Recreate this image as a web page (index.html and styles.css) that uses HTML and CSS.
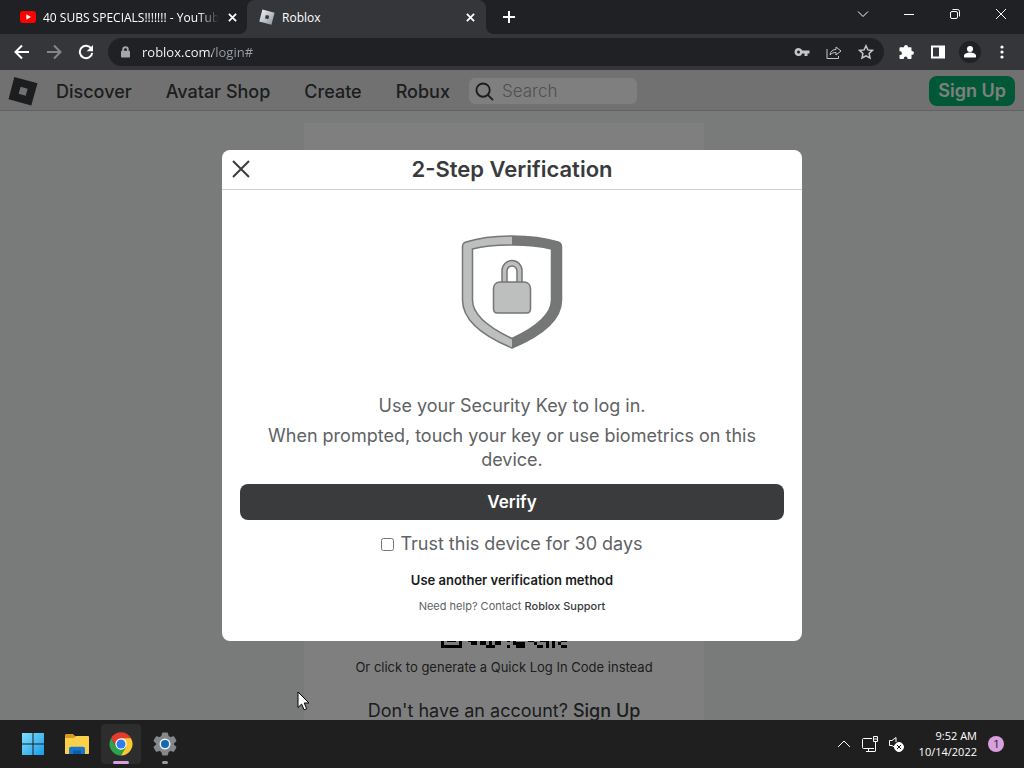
FILE: index.html
```html
<!DOCTYPE html>
<html lang="en">
<head>
    <meta charset="UTF-8">
    <meta name="viewport" content="width=device-width, initial-scale=1.0">
    <title>Roblox</title>
    <link rel="stylesheet" href="styles.css">
</head>
<body>

    <!-- Browser tabs -->
    <div class="tab-bar">
        <div class="tab">
            <svg class="tab-icon" viewBox="0 0 16 16"><rect y="2" width="16" height="12" rx="3" fill="#f00"/><path d="M6.3 5.2v5.6L11 8z" fill="#fff"/></svg>
            <span class="tab-title tab-title-fade">40 SUBS SPECIALS!!!!!!! - YouTub</span>
            <button class="tab-close" aria-label="Close tab"><svg viewBox="0 0 10 10"><path d="M1 1l8 8M9 1l-8 8"/></svg></button>
        </div>
        <div class="tab tab-active">
            <svg class="tab-icon" viewBox="0 0 16 16"><defs><linearGradient id="silver" x1="0" y1="0" x2="1" y2="1"><stop offset="0" stop-color="#f4f6f8"/><stop offset="1" stop-color="#8b939d"/></linearGradient></defs><path fill="url(#silver)" fill-rule="evenodd" d="M3.4.5l12.2 3.2-3.2 12L.3 12.5zM6.9 5.9l-.9 3.4 3.3.9.9-3.4z"/></svg>
            <span class="tab-title">Roblox</span>
            <button class="tab-close" aria-label="Close tab"><svg viewBox="0 0 10 10"><path d="M1 1l8 8M9 1l-8 8"/></svg></button>
        </div>
        <button class="new-tab" aria-label="New tab"><svg viewBox="0 0 12 12"><path d="M6 0v12M0 6h12"/></svg></button>
        <div class="window-controls">
            <button aria-label="Search tabs"><svg viewBox="0 0 12 12"><path d="M1 3.5l5 5 5-5"/></svg></button>
            <button aria-label="Minimize"><svg viewBox="0 0 12 12"><path d="M1 6.5h10"/></svg></button>
            <button aria-label="Restore"><svg viewBox="0 0 12 12"><rect x="1.5" y="3.5" width="7" height="7" rx="1.5"/><path d="M3.5 1.5h5a2 2 0 0 1 2 2v5"/></svg></button>
            <button aria-label="Close"><svg viewBox="0 0 12 12"><path d="M1 1l10 10M11 1L1 11"/></svg></button>
        </div>
    </div>

    <!-- Address bar -->
    <div class="toolbar">
        <button class="tool" aria-label="Back"><svg viewBox="0 0 16 16"><path class="line" d="M15 8H2M8 1.5L1.5 8 8 14.5"/></svg></button>
        <button class="tool tool-off" aria-label="Forward" disabled><svg viewBox="0 0 16 16"><path class="line" d="M1 8h13M8 1.5L14.5 8 8 14.5"/></svg></button>
        <button class="tool" aria-label="Reload"><svg viewBox="0 0 16 16"><path class="line" d="M13.3 4.7A6.2 6.2 0 1 0 14.2 8.8"/><path d="M15 1v6.3H8.7z"/></svg></button>
        <div class="address">
            <svg class="lock" viewBox="0 0 10 12"><rect y="4.5" width="10" height="7.5" rx="1"/><path class="line" d="M2.4 5V3.3a2.6 2.6 0 0 1 5.2 0V5"/></svg>
            <input class="url" type="text" aria-label="Address" value="roblox.com/login#">
            <button class="tool tool-soft" aria-label="Passwords"><svg viewBox="0 0 16 16"><path fill-rule="evenodd" d="M4.5 4a4 4 0 1 0 3.8 5.4H10.500V12h3V9.400H15.500V6.600H8.300A4 4 0 0 0 4.500 4zm0 2.500a1.500 1.500 0 1 1 0 3 1.500 1.500 0 0 1 0-3z"/></svg></button>
            <button class="tool tool-soft" aria-label="Share"><svg viewBox="0 0 16 16"><path class="thin" d="M1 5v9.500h11.500V12M4 11c.3-3.500 2.500-5.500 6-5.500V3l5 4-5 4V8.500c-2.500 0-4.500.6-6 2.500z"/></svg></button>
            <button class="tool tool-soft" aria-label="Bookmark"><svg viewBox="0 0 16 16"><path class="thin" stroke-width="1.5" d="M8 1.800l1.900 4.100 4.500.5-3.300 3.100.9 4.500L8 11.800 4 14l.9-4.500L1.600 6.400l4.500-.5z"/></svg></button>
        </div>
        <button class="tool" aria-label="Extensions"><svg viewBox="0 0 16 16"><path d="M6 3a2 2 0 0 1 4 0v.3h2.500c.6 0 1 .4 1 1V7H14a1.900 1.900 0 0 1 0 3.800h-.5v3.100c0 .6-.4 1-1 1H9.600v-.5a1.900 1.900 0 0 0-3.800 0v.5H2.500c-.6 0-1-.4-1-1v-2.800H2a1.900 1.900 0 0 0 0-3.900h-.5V4.300c0-.6.4-1 1-1H6z"/></svg></button>
        <button class="tool" aria-label="Side panel"><svg viewBox="0 0 16 16"><path fill-rule="evenodd" d="M1 1.500h14v13H1zM3 3.500v9h6v-9z"/></svg></button>
        <button class="tool profile" aria-label="Profile"><svg viewBox="0 0 16 16"><circle cx="8" cy="5" r="3"/><path d="M2 13.500V12c0-2.200 3-3.400 6-3.400s6 1.200 6 3.400v1.500z"/></svg></button>
        <button class="tool" aria-label="Menu"><svg viewBox="0 0 16 16"><circle cx="8" cy="3" r="1.600"/><circle cx="8" cy="8" r="1.600"/><circle cx="8" cy="13" r="1.600"/></svg></button>
    </div>

    <!-- Login page -->
    <main class="page">
        <nav class="nav">
            <a class="logo" href="#" aria-label="Roblox"><svg viewBox="0 0 30 30"><path fill-rule="evenodd" d="M6.300 1L29.500 7.200 23.300 29.500.5 23.300zM12.600 10.800l-1.900 7 7 1.900 1.900-7z"/></svg></a>
            <a href="#">Discover</a>
            <a href="#">Avatar Shop</a>
            <a href="#">Create</a>
            <a href="#">Robux</a>
            <label class="search">
                <svg viewBox="0 0 20 20"><circle cx="8.500" cy="8.500" r="7"/><path d="M13.500 13.500L19 19"/></svg>
                <input type="search" placeholder="Search" aria-label="Search">
            </label>
            <a class="sign-up" href="#">Sign Up</a>
        </nav>

        <div class="content">
            <section class="login-card">
                <svg class="qr" viewBox="0 0 42 42"><path d="M0 35h7v7H0zM9 39h3v1H9zM10 40h2v1h-2zM13 39h2v2h-2zM15 41h3v1h-3zM16 39h1v2h-1zM18 39h2v2h-2zM22 39h1v1h-1zM22 41h1v1h-1zM24 39h1v2h-1zM25 40h3v2h-3zM29 39h2v1h-2zM31 40h1v1h-1zM33 39h3v1h-3zM32 41h2v1h-2zM35 40h1v2h-1zM37 39h1v3h-1zM39 40h1v1h-1zM40 39h2v1h-2zM40 41h2v1h-2z"/><path fill="#fff" d="M1 36h5v5H1z"/><path d="M2 37h3v3H2z"/></svg>
                <p class="quick-code">Or click to generate a Quick Log In Code instead</p>
                <p class="no-account">Don't have an account? <a href="#">Sign Up</a></p>
            </section>
        </div>

        <!-- Verification dialog -->
        <div class="backdrop">
            <div class="modal" role="dialog" aria-labelledby="modalTitle">
                <header class="modal-header">
                    <button class="modal-close" aria-label="Close"><svg viewBox="0 0 18 18"><path d="M1 1l16 16M17 1L1 17"/></svg></button>
                    <h1 id="modalTitle">2-Step Verification</h1>
                </header>
                <div class="modal-body">
                    <svg class="shield" viewBox="0 0 102 116">
                        <path fill="#bdbebe" d="M51 2C34 2 18 4 5 8 2 9 1.500 10 1.500 13v53C1.500 86 22 102 51 114z"/>
                        <path fill="#757676" d="M51 2c17 0 33 2 46 6 3 1 3.500 2 3.500 5v53C100.500 86 80 102 51 114z"/>
                        <g stroke="#757676" stroke-width="1.5">
                            <path fill="none" d="M51 2C34 2 18 4 5 8 2 9 1.500 10 1.500 13v53C1.500 86 22 102 51 114c29-12 49.500-28 49.500-48V13c0-3-.5-4-3.500-5C84 4 68 2 51 2z"/>
                            <path fill="#fff" d="M51 11c-14 0-28 1-39.500 4v51c0 14 15 27 39.500 38.500C75.500 93 90.500 80 90.500 66V15C79 12 65 11 51 11z"/>
                            <path fill="#bdbebe" d="M41 50V36.500a10 10 0 0 1 20 0V50h-5V37a5 5 0 0 0-10 0v13z"/>
                            <path fill="#bdbebe" d="M39 48h24c4 0 6.500 3 6.500 7v20c0 3-1 4-4 4h-29c-3 0-4-1-4-4V55c0-4 2.500-7 6.500-7z"/>
                        </g>
                    </svg>
                    <p>Use your Security Key to log in.</p>
                    <p>When prompted, touch your key or use biometrics on this device.</p>
                    <button class="verify">Verify</button>
                    <label class="trust"><input type="checkbox"> Trust this device for 30 days</label>
                    <a class="other-method" href="#">Use another verification method</a>
                    <small class="help">Need help? Contact <a href="#">Roblox Support</a></small>
                </div>
            </div>
        </div>
    </main>

    <!-- Windows taskbar -->
    <footer class="taskbar">
        <button class="app" aria-label="Start"><svg viewBox="0 0 24 24"><defs><linearGradient id="sky" x1="0" y1="0" x2="1" y2="1"><stop offset="0" stop-color="#7fe0fb"/><stop offset="1" stop-color="#1a9bea"/></linearGradient></defs><path fill="url(#sky)" d="M1 1h10.500v10.500H1zM12.500 1H23v10.500H12.500zM1 12.500h10.500V23H1zM12.500 12.500H23V23H12.500z"/></svg></button>
        <button class="app" aria-label="File Explorer"><svg viewBox="0 0 24 24"><path fill="#d99a1c" d="M0 3.500C0 2.500.5 2 1.500 2H8l2.500 2.500V8H0z"/><path fill="#fbd04b" d="M0 6h9l2-2h12c.7 0 1 .5 1 1v16c0 .7-.4 1-1 1H1c-.6 0-1-.4-1-1z"/><path fill="#1976c8" d="M4 22v-5c0-1.400.9-2.300 2.300-2.300h11.400c1.400 0 2.300.9 2.300 2.300v5h-4v-3H8v3z"/><path fill="#0f5ba8" d="M8 18.500h8V22H8z"/></svg></button>
        <button class="app app-open app-current" aria-label="Google Chrome"><svg viewBox="0 0 24 24"><path fill="#e33b2e" d="M12 12L2.040 6.250a11.500 11.500 0 0 1 19.920 0z"/><path fill="#e33b2e" d="M2.040 6.250A11.500 11.500 0 0 1 21.960 6.250H12L7 14.900z"/><path fill="#2ba24c" d="M2.040 6.250A11.500 11.500 0 0 0 12 23.500l5-8.600H7z"/><path fill="#fcc934" d="M21.960 6.250A11.500 11.500 0 0 1 12 23.500l5-8.600-5-8.650z"/><circle cx="12" cy="12" r="5.700" fill="#fff"/><circle cx="12" cy="12" r="4.500" fill="#2f7de9"/></svg></button>
        <button class="app app-open" aria-label="Settings"><svg viewBox="0 0 24 24"><path fill="#85888b" stroke="#85888b" stroke-linejoin="round" stroke-width="2" d="M10 1.500h4l.8 3.200 2.400 1.400 3.200-.9 2 3.500-2.400 2.300v2l2.400 2.300-2 3.500-3.200-.9-2.400 1.400-.8 3.200h-4l-.8-3.200-2.400-1.400-3.200.9-2-3.500L4 13V11L1.600 8.700l2-3.500 3.200.9 2.400-1.400z"/><circle cx="12" cy="12" r="5.500" fill="#e8f1f8"/><circle cx="12" cy="12" r="4" fill="#1468b0"/></svg></button>
        <div class="tray">
            <button aria-label="Show hidden icons"><svg viewBox="0 0 18 18"><path d="M3 12l6-6 6 6"/></svg></button>
            <button aria-label="Network"><svg viewBox="0 0 18 18"><path d="M11 3.500H2.500c-.6 0-1 .4-1 1v8c0 .6.4 1 1 1H13M5 16.500h9M7.500 13.500v3M12.500 1.500h4v5h-4zM14.500 6.500v10M12.500 4h4"/></svg></button>
            <button aria-label="Volume muted"><svg viewBox="0 0 18 18"><path d="M9 13l-4-2.500H2.500v-5H5L9 2.500V7"/><circle cx="12" cy="12" r="4.500" fill="#fff"/><path class="mute-x" d="M10 10l4 4M14 10l-4 4"/></svg></button>
            <time class="clock" datetime="2022-10-14T09:52">9:52 AM<br>10/14/2022</time>
            <span class="badge">1</span>
        </div>
    </footer>

    <!-- Mouse pointer -->
    <svg class="pointer" viewBox="0 0 13 20"><path d="M1 1v15.500l3.600-3.400 2.500 5.700 2.600-1.100L7.200 12H12z"/></svg>

</body>
</html>
```
FILE: styles.css
```css
* {
    box-sizing: border-box;
}

body {
    display: flex;
    flex-direction: column;
    height: 100vh;
    margin: 0;
    overflow: hidden;
    font-family: Inter, "Liberation Sans", sans-serif;
    color: #393b3d;
    background: #202124;
}

button {
    display: flex;
    justify-content: center;
    align-items: center;
    padding: 0;
    border: none;
    background: none;
    color: inherit;
    font-family: inherit;
}

a {
    color: inherit;
    text-decoration: none;
}

/* Browser tabs */
.tab-bar {
    display: flex;
    flex: none;
    height: 34px;
    padding-left: 8px;
    color: #fff;
    font: 12px "Open Sans", "Noto Sans", sans-serif;
}

.tab {
    position: relative;
    display: flex;
    align-items: center;
    flex: 0 1 239px;
    min-width: 0;
    padding: 0 8px 0 12px;
}

.tab-active {
    background: #35363a;
    border-radius: 8px 8px 0 0;
}

/* curved feet of the active tab */
.tab-active::before,
.tab-active::after {
    content: "";
    position: absolute;
    bottom: 0;
    width: 8px;
    height: 8px;
}

.tab-active::before {
    right: 100%;
    background: radial-gradient(circle at top left, transparent 8px, #35363a 8px);
}

.tab-active::after {
    left: 100%;
    background: radial-gradient(circle at top right, transparent 8px, #35363a 8px);
}

.tab-icon {
    flex: none;
    width: 16px;
    height: 16px;
    margin-right: 7px;
}

.tab-title {
    flex: 1;
    white-space: nowrap;
}

.tab-title-fade {
    mask-image: linear-gradient(to right, #000 88%, transparent);
}

.tab-close {
    width: 16px;
    height: 16px;
    margin-left: 6px;
}

.tab-close svg {
    width: 9px;
    stroke: #fff;
    stroke-width: 2;
}

.new-tab {
    width: 28px;
    margin-left: 9px;
}

.new-tab svg {
    width: 12px;
    stroke: #fff;
    stroke-width: 2;
}

.window-controls {
    display: flex;
    height: 28px;
    margin-left: auto;
}

.window-controls button {
    width: 46px;
}

.window-controls svg {
    width: 12px;
    fill: none;
    stroke: #fff;
}

/* Address bar */
.toolbar {
    display: flex;
    align-items: center;
    flex: none;
    height: 36px;
    padding: 0 6px;
    background: #35363a;
    color: #fff;
}

.tool {
    flex: none;
    width: 32px;
    height: 28px;
}

.tool svg {
    width: 16px;
    height: 16px;
    fill: currentColor;
}

.toolbar .line {
    fill: none;
    stroke: currentColor;
    stroke-width: 2;
}

.tool-off {
    color: #85868a;
}

.tool-soft {
    color: #c4c6ca;
}

.thin {
    fill: none;
    stroke: currentColor;
}

.profile svg {
    width: 22px;
    height: 22px;
    padding: 3px;
    border-radius: 50%;
    background: #202124;
}

.address {
    display: flex;
    align-items: center;
    flex: 1;
    height: 28px;
    margin: 0 6px;
    padding: 0 2px 0 13px;
    border-radius: 14px;
    background: #202124;
}

.lock {
    width: 9px;
    height: 12px;
    margin-right: 12px;
    fill: #a4a6aa;
    color: #a4a6aa;
}

.url {
    flex: 1;
    min-width: 0;
    padding: 0;
    border: none;
    outline: none;
    font: 13px "Open Sans", "Noto Sans", sans-serif;
    color: transparent;
    /* host stays bright, path is dimmed */
    background: linear-gradient(to right, #fff 70px, #9aa0a6 70px);
    background-clip: text;
}

/* Login page */
.page {
    position: relative;
    display: flex;
    flex-direction: column;
    flex: 1;
    min-height: 0;
    overflow: hidden;
    background: #f2f4f5;
}

.nav {
    display: flex;
    align-items: center;
    flex: none;
    gap: 34px;
    height: 41px;
    padding: 2px 9px 0 8px;
    border-bottom: 1px solid #c3c5c7;
    background: #e2e3e4;
    font-size: 18px;
    font-weight: 500;
}

.logo {
    width: 30px;
    height: 30px;
    margin-right: -16px;
    fill: #393b3d;
}

.search {
    display: flex;
    align-items: center;
    width: 168px;
    height: 26px;
    margin-left: -15px;
    padding-left: 6px;
    border-radius: 6px;
    background: #fff;
}

.search svg {
    flex: none;
    width: 19px;
    margin-right: 8px;
    fill: none;
    stroke: #393b3d;
    stroke-width: 2;
}

.search input {
    width: 100%;
    min-width: 0;
    padding: 0;
    border: none;
    background: none;
    font: 300 17px Inter, sans-serif;
}

.search input::placeholder {
    color: #a0a2a4;
}

.sign-up {
    margin-left: auto;
    padding: 0 9px;
    border-radius: 8px;
    background: #00b06f;
    color: #fff;
    font-weight: 600;
    line-height: 30px;
}

.content {
    display: flex;
    justify-content: center;
    flex: 1;
    min-height: 0;
    padding: 12px 16px 0 0;
}

.login-card {
    display: flex;
    flex-direction: column;
    justify-content: flex-end;
    align-items: center;
    width: 400px;
    max-width: 100%;
    background: #fff;
}

.qr {
    width: 126px;
}

.quick-code {
    margin: 10px 0 25px;
    font-size: 13px;
    line-height: 18px;
}

.no-account {
    margin: 0;
    font-size: 18px;
    line-height: 19px;
}

.no-account a {
    font-weight: 500;
}

/* Verification dialog */
.backdrop {
    position: absolute;
    inset: 0;
    display: flex;
    justify-content: center;
    align-items: flex-start;
    padding: 80px 20px 0;
    background: rgba(0, 0, 0, 0.5);
}

.modal {
    width: 100%;
    max-width: 580px;
    border-radius: 8px;
    background: #fff;
}

.modal-header {
    display: flex;
    align-items: center;
    height: 40px;
    padding: 0 10px 1px;
    border-bottom: 1px solid #d0d2d3;
}

.modal-header h1 {
    flex: 1;
    margin: 0 18px 0 0;
    font-size: 22px;
    font-weight: 600;
    line-height: 24px;
    text-align: center;
}

.modal-close svg {
    width: 18px;
    stroke: #393b3d;
    stroke-width: 2;
}

.modal-body {
    display: flex;
    flex-direction: column;
    align-items: center;
    padding: 44px 18px 27px;
    color: #606264;
    font-size: 18px;
    line-height: 24px;
    text-align: center;
}

.shield {
    width: 102px;
    margin-bottom: 44px;
}

.modal-body p {
    margin: 0 0 6px;
    padding: 0 20px;
}

.verify {
    width: 100%;
    height: 36px;
    margin: 6px 0 12px;
    border-radius: 8px;
    background: #393b3d;
    color: #fff;
    font-size: 17px;
    font-weight: 600;
}

.trust {
    display: flex;
    align-items: center;
    gap: 6px;
}

.trust input {
    width: 13px;
    height: 13px;
    margin: 0;
}

.other-method {
    margin-top: 12px;
    color: #191b1d;
    font-size: 13px;
    font-weight: 600;
}

.help {
    margin-top: 6px;
    font-size: 11px;
    line-height: 16px;
}

.help a {
    color: #393b3d;
    font-weight: 500;
}

/* Windows taskbar */
.taskbar {
    display: flex;
    align-items: center;
    flex: none;
    gap: 4px;
    height: 48px;
    padding: 0 20px 0 13px;
    background: #1f1f1f;
    color: #fff;
}

.app {
    position: relative;
    width: 40px;
    height: 40px;
    border-radius: 4px;
}

.app svg {
    width: 24px;
    height: 24px;
}

.app-current {
    background: #2d2d2d;
}

/* running indicator under the icon */
.app-open::after {
    content: "";
    position: absolute;
    bottom: 0;
    width: 6px;
    height: 3px;
    border-radius: 2px;
    background: #9a9a9a;
}

.app-current::after {
    width: 16px;
    background: #d8a0dc;
}

.tray {
    display: flex;
    align-items: center;
    gap: 8px;
    margin-left: auto;
}

.tray svg {
    width: 18px;
    fill: none;
    stroke: #fff;
}

.tray .mute-x {
    stroke: #1f1f1f;
}

.clock {
    margin-left: 6px;
    font: 11px/16px "Open Sans", "Noto Sans", sans-serif;
    text-align: right;
}

.badge {
    width: 16px;
    margin-left: 3px;
    border-radius: 50%;
    background: #d8a0dc;
    color: #1f1f1f;
    font-size: 10px;
    line-height: 16px;
    text-align: center;
}

.pointer {
    position: absolute;
    top: 691px;
    left: 297px;
    width: 13px;
    fill: #fff;
    stroke: #000;
}
```
